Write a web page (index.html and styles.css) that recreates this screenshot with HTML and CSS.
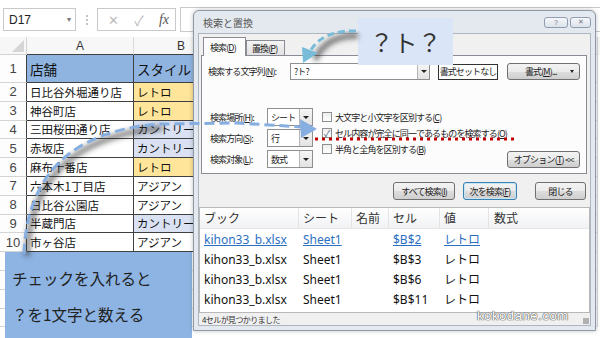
FILE: index.html
```html
<!DOCTYPE html>
<html lang="ja">
<head>
<meta charset="utf-8">
<title>検索と置換</title>
<link rel="stylesheet" href="styles.css">
</head>
<body>
<div class="fbar">
  <div class="namebox"><span>D17</span><span class="nb-arrow">▾</span></div>
  <div class="fsep"><span></span></div>
  <div class="fbtns"><span class="fx-x">✕</span><span class="fx-ok">✓</span><span class="fx-fx">fx</span></div>
  <div class="finput"></div>
</div>
<div class="sheet">
  <div class="row hdr">
    <div class="rh corner"><span class="tri"></span></div>
    <div class="c ca ch">A</div><div class="c cb ch">B</div><div class="c cc ch"></div><div class="c cd ch"></div><div class="c ce ch"></div><div class="c cf ch"></div><div class="c cg ch"></div>
  </div>
  <div class="row r1">
    <div class="rh tl">1</div>
    <div class="c ca t head big">店舗</div><div class="c cb t head big">スタイル</div><div class="c cc"></div><div class="c cd"></div><div class="c ce"></div><div class="c cf"></div><div class="c cg"></div>
  </div>
  <div class="row">
    <div class="rh tl">2</div>
    <div class="c ca t">日比谷外堀通り店</div><div class="c cb t retro">レトロ</div><div class="c cc"></div><div class="c cd"></div><div class="c ce"></div><div class="c cf"></div><div class="c cg"></div>
  </div>
  <div class="row">
    <div class="rh tl">3</div>
    <div class="c ca t">神谷町店</div><div class="c cb t retro">レトロ</div><div class="c cc"></div><div class="c cd"></div><div class="c ce"></div><div class="c cf"></div><div class="c cg"></div>
  </div>
  <div class="row">
    <div class="rh tl">4</div>
    <div class="c ca t">三田桜田通り店</div><div class="c cb t country">カントリー</div><div class="c cc"></div><div class="c cd"></div><div class="c ce"></div><div class="c cf"></div><div class="c cg"></div>
  </div>
  <div class="row">
    <div class="rh tl">5</div>
    <div class="c ca t">赤坂店</div><div class="c cb t country">カントリー</div><div class="c cc"></div><div class="c cd"></div><div class="c ce"></div><div class="c cf"></div><div class="c cg"></div>
  </div>
  <div class="row">
    <div class="rh tl">6</div>
    <div class="c ca t">麻布十番店</div><div class="c cb t retro">レトロ</div><div class="c cc"></div><div class="c cd"></div><div class="c ce"></div><div class="c cf"></div><div class="c cg"></div>
  </div>
  <div class="row">
    <div class="rh tl">7</div>
    <div class="c ca t">六本木1丁目店</div><div class="c cb t">アジアン</div><div class="c cc"></div><div class="c cd"></div><div class="c ce"></div><div class="c cf"></div><div class="c cg"></div>
  </div>
  <div class="row">
    <div class="rh tl">8</div>
    <div class="c ca t">日比谷公園店</div><div class="c cb t">アジアン</div><div class="c cc"></div><div class="c cd"></div><div class="c ce"></div><div class="c cf"></div><div class="c cg"></div>
  </div>
  <div class="row">
    <div class="rh tl">9</div>
    <div class="c ca t">半蔵門店</div><div class="c cb t country">カントリー</div><div class="c cc"></div><div class="c cd"></div><div class="c ce"></div><div class="c cf"></div><div class="c cg"></div>
  </div>
  <div class="row">
    <div class="rh tl">10</div>
    <div class="c ca t">市ヶ谷店</div><div class="c cb t">アジアン</div><div class="c cc"></div><div class="c cd"></div><div class="c ce"></div><div class="c cf"></div><div class="c cg"></div>
  </div>
  <div class="row">
    <div class="rh"></div>
    <div class="c ca"></div><div class="c cb"></div><div class="c cc"></div><div class="c cd"></div><div class="c ce"></div><div class="c cf"></div><div class="c cg"></div>
  </div>
  <div class="row">
    <div class="rh"></div>
    <div class="c ca"></div><div class="c cb"></div><div class="c cc"></div><div class="c cd"></div><div class="c ce"></div><div class="c cf"></div><div class="c cg"></div>
  </div>
  <div class="row">
    <div class="rh"></div>
    <div class="c ca"></div><div class="c cb"></div><div class="c cc"></div><div class="c cd"></div><div class="c ce"></div><div class="c cf"></div><div class="c cg"></div>
  </div>
  <div class="row">
    <div class="rh"></div>
    <div class="c ca"></div><div class="c cb"></div><div class="c cc"></div><div class="c cd"></div><div class="c ce"></div><div class="c cf"></div><div class="c cg"></div>
  </div>
</div>

<div class="callout-left">
  <p>チェックを入れると</p>
  <p>？を1文字と数える</p>
</div>

<div class="dlg">
  <div class="titlebar">
    <span class="title">検索と置換</span>
    <div class="tbtns"><span class="tbtn help">?</span><span class="tbtn close">✕</span></div>
  </div>
  <div class="client">
    <div class="tabs">
      <div class="tab active">検索(<u>D</u>)</div>
      <div class="tab">置換(<u>P</u>)</div>
    </div>
    <div class="panel">
      <div class="findrow">
        <span class="lbl lbl-find">検索する文字列(<u>N</u>):</span>
        <div class="combo find"><span class="val">?ト?</span><span class="dd"><i></i></span></div>
        <div class="fmtbox">書式セットなし</div>
        <div class="btn fmtbtn"><span>書式(<u>M</u>)...</span><i class="caret"></i></div>
      </div>
      <div class="opts">
        <div class="selects">
          <div class="selrow"><span class="lbl lbl-sel">検索場所(<u>H</u>):</span><div class="combo sel"><span class="val">シート</span><span class="dd"><i></i></span></div></div>
          <div class="selrow"><span class="lbl lbl-sel">検索方向(<u>S</u>):</span><div class="combo sel"><span class="val">行</span><span class="dd"><i></i></span></div></div>
          <div class="selrow"><span class="lbl lbl-sel">検索対象(<u>L</u>):</span><div class="combo sel"><span class="val">数式</span><span class="dd"><i></i></span></div></div>
        </div>
        <div class="checks">
          <div class="chkrow"><span class="box"></span>大文字と小文字を区別する(<u>C</u>)</div>
          <div class="chkrow"><span class="box on">✓</span>セル内容が完全に同一であるものを検索する(<u>O</u>)</div>
          <div class="chkrow"><span class="box"></span>半角と全角を区別する(<u>B</u>)</div>
        </div>
        <div class="btn optbtn">オプション(<u>T</u>) &lt;&lt;</div>
      </div>
    </div>
    <div class="actions">
      <div class="btn b-all">すべて検索(<u>I</u>)</div>
      <div class="btn b-next">次を検索(<u>F</u>)</div>
      <div class="btn b-close">閉じる</div>
    </div>
    <div class="results">
      <div class="lrow lhead">
        <span class="k1">ブック</span><span class="k2">シート</span><span class="k3">名前</span><span class="k4">セル</span><span class="k5">値</span><span class="k6">数式</span>
      </div>
      <div class="lrow link">
        <span class="k1"><u>kihon33_b.xlsx</u></span><span class="k2"><u>Sheet1</u></span><span class="k3"></span><span class="k4"><u>$B$2</u></span><span class="k5"><u>レトロ</u></span><span class="k6"></span>
      </div>
      <div class="lrow">
        <span class="k1">kihon33_b.xlsx</span><span class="k2">Sheet1</span><span class="k3"></span><span class="k4">$B$3</span><span class="k5">レトロ</span><span class="k6"></span>
      </div>
      <div class="lrow">
        <span class="k1">kihon33_b.xlsx</span><span class="k2">Sheet1</span><span class="k3"></span><span class="k4">$B$6</span><span class="k5">レトロ</span><span class="k6"></span>
      </div>
      <div class="lrow">
        <span class="k1">kihon33_b.xlsx</span><span class="k2">Sheet1</span><span class="k3"></span><span class="k4">$B$11</span><span class="k5">レトロ</span><span class="k6"></span>
      </div>
    </div>
    <div class="status"><span>4セルが見つかりました</span><span class="grip"></span></div>
  </div>
</div>

<div class="callout-top">？ト？</div>

<div class="watermark">kokodane.com</div>

<svg class="overlay" width="600" height="338" viewBox="0 0 600 338">
  <defs>
    <filter id="blur" x="-20%" y="-20%" width="140%" height="140%"><feGaussianBlur stdDeviation="2.5"/></filter>
  </defs>
  <path d="M27 256 C 30 182, 70 136, 162 128" fill="none" stroke="#333" stroke-opacity="0.55" stroke-width="6" filter="url(#blur)"/>
  <path d="M358 36 C 338 35, 322 43, 315 60" fill="none" stroke="#333" stroke-opacity="0.6" stroke-width="6" filter="url(#blur)"/>
  <path d="M24 254 C 27 178, 68 131, 160 124 L 238 123 L 302 127" fill="none" stroke="#86aee0" stroke-width="3" stroke-dasharray="10 5"/>
  <polygon points="300,119 317,129 301,138" fill="#86aee0"/>
  <path d="M356 31 C 336 30, 318 37, 311 50" fill="none" stroke="#78bcd9" stroke-width="3" stroke-dasharray="7 4"/>
  <polygon points="303,63 302,47 318,53" fill="#78bcd9"/>
  <line x1="315" y1="139" x2="514" y2="139" stroke="#c00000" stroke-width="3" stroke-dasharray="3 4"/>
</svg>
</body>
</html>
```

FILE: styles.css
```css
html, body {
  margin: 0;
  padding: 0;
}
body {
  width: 600px;
  height: 338px;
  overflow: hidden;
  position: relative;
  background: #ffffff;
  font-family: "Noto Sans CJK JP", sans-serif;
  color: #222;
}

/* ---------- formula bar ---------- */
.fbar {
  height: 37px;
  box-sizing: border-box;
  display: flex;
  align-items: flex-start;
  padding: 8px 0 0 3px;
}
.namebox {
  width: 73px;
  height: 23px;
  box-sizing: border-box;
  border: 1px solid #c9c9c9;
  display: flex;
  align-items: center;
  justify-content: space-between;
  padding: 0 4px 0 5px;
  font: 12px "Liberation Sans", sans-serif;
  color: #222;
}
.nb-arrow { font-size: 8px; color: #777; }
.fsep {
  width: 21px;
  height: 23px;
  display: flex;
  justify-content: center;
  align-items: center;
}
.fsep span {
  width: 0;
  height: 10px;
  border-left: 2px dotted #c4c4c4;
}
.fbtns {
  width: 79px;
  height: 23px;
  box-sizing: border-box;
  border: 1px solid #c9c9c9;
  display: flex;
  align-items: center;
  justify-content: space-between;
  padding: 0 6px 0 10px;
}
.fx-x { color: #bcbcbc; font-size: 13px; }
.fx-ok { color: #bcbcbc; font-size: 14px; }
.fx-fx { font: italic 14px "Liberation Serif", serif; color: #555; }
.finput {
  flex: 1;
  height: 25px;
  margin: -1px 0 0 4px;
  box-sizing: border-box;
  border: 1px solid #c9c9c9;
  border-right: none;
}

/* ---------- sheet ---------- */
.row {
  display: flex;
  height: 18.8px;
}
.row.hdr { height: 18px; background: #f7f7f7; }
.row.r1 { height: 28px; }
.rh {
  width: 27px;
  flex: none;
  box-sizing: border-box;
  border-right: 1px solid #d4d4d4;
  border-bottom: 1px solid #d4d4d4;
  display: flex;
  align-items: center;
  justify-content: center;
  font: 13px "Liberation Sans", sans-serif;
  color: #444;
  background: #fdfdfd;
}
.rh.tl { border-right-color: #404040; }
.corner {
  justify-content: flex-end;
  align-items: flex-end;
  padding: 0 2px 2px 0;
  background: #f7f7f7;
}
.tri {
  width: 0;
  height: 0;
  border-left: 12px solid transparent;
  border-bottom: 12px solid #d6d6d6;
}
.c {
  flex: none;
  box-sizing: border-box;
  border-right: 1px solid #dadada;
  border-bottom: 1px solid #dadada;
  overflow: hidden;
  white-space: nowrap;
}
.ca { width: 107px; }
.cb { width: 95px; }
.cc { width: 89px; }
.cd { width: 74px; }
.ce { width: 73px; }
.cf { width: 63px; }
.cg { width: 70px; }
.ch {
  display: flex;
  align-items: center;
  justify-content: center;
  font: 12px "Liberation Sans", sans-serif;
  color: #333;
}
.hdr .ca, .hdr .cb { border-bottom-color: #404040; }
.t {
  border-color: #404040;
  display: flex;
  align-items: center;
  padding-left: 3px;
  font-size: 11.5px;
  color: #111;
}
.t.big { font-size: 13.5px; }
.head { background: #8fb4e0; }
.retro { background: #ffe599; }
.country { background: #d9e1f2; }

/* ---------- left callout ---------- */
.callout-left {
  position: absolute;
  left: 5px;
  top: 252px;
  width: 187px;
  height: 90px;
  background: #8db4e2;
  box-sizing: border-box;
  padding: 8px 0 0 7px;
  z-index: 3;
}
.callout-left p {
  margin: 0;
  font-size: 15.5px;
  line-height: 36px;
  color: #222;
}

/* ---------- dialog ---------- */
.dlg {
  position: absolute;
  left: 193px;
  top: 10px;
  width: 403px;
  height: 321px;
  box-sizing: border-box;
  border: 1px solid #8d99a6;
  border-radius: 6px 6px 0 0;
  background: #e4e9ef;
  padding: 0 4px 4px;
  display: flex;
  flex-direction: column;
  box-shadow: 0 0 4px rgba(0,0,0,0.25);
  z-index: 4;
  font-size: 9px;
  letter-spacing: -0.9px;
}
.titlebar {
  height: 22px;
  flex: none;
  display: flex;
  align-items: center;
  justify-content: space-between;
  padding-left: 5px;
}
.title { font-size: 10px; color: #555; letter-spacing: 0; }
.tbtns { display: flex; gap: 2px; margin-right: 0; }
.tbtn {
  height: 11px;
  box-sizing: border-box;
  border: 1px solid #8f9db0;
  border-radius: 3px;
  background: linear-gradient(#f6f8fb, #dce2ea);
  display: flex;
  align-items: center;
  justify-content: center;
  font: 7px "Liberation Sans", sans-serif;
  color: #6c7785;
  letter-spacing: 0;
}
.tbtn.help { width: 24px; }
.tbtn.close { width: 21px; }

.client {
  flex: 1;
  background: #f0f0f0;
  border: 1px solid #adb6c0;
  display: flex;
  flex-direction: column;
  min-height: 0;
}
.tabs {
  display: flex;
  align-items: flex-end;
  height: 18px;
  margin: 3px 0 0 4px;
  flex: none;
}
.tab {
  height: 15px;
  box-sizing: border-box;
  border: 1px solid #898c95;
  border-bottom: none;
  background: linear-gradient(#f4f4f4, #e1e1e1);
  padding: 0 5px;
  display: flex;
  align-items: center;
  width: 39px;
}
.tab.active {
  height: 19px;
  width: 43px;
  margin-bottom: -1px;
  background: #fcfcfc;
  position: relative;
  z-index: 1;
  padding-left: 6px;
}
.panel {
  flex: none;
  height: 119px;
  margin: 0 3px 0 2px;
  box-sizing: border-box;
  border: 1px solid #898c95;
  background: #fcfcfc;
  padding: 7px 6px 8px 6px;
  display: flex;
  flex-direction: column;
}
.findrow {
  display: flex;
  align-items: center;
  height: 17px;
}
.lbl-find { width: 82px; flex: none; }
.combo {
  box-sizing: border-box;
  border: 1px solid #8e8f8f;
  background: #fff;
  display: flex;
  align-items: stretch;
  justify-content: space-between;
  flex: none;
}
.combo .val { padding-left: 3px; display: flex; align-items: center; }
.combo .dd {
  width: 11px;
  border-left: 1px solid #b5b5b5;
  background: linear-gradient(#f6f6f6, #e2e2e2);
  display: flex;
  align-items: center;
  justify-content: center;
}
.combo .dd i {
  width: 0;
  height: 0;
  border-left: 3px solid transparent;
  border-right: 3px solid transparent;
  border-top: 3px solid #222;
}
.combo.find { width: 140px; height: 17px; }
.fmtbox {
  width: 60px;
  height: 16px;
  margin-left: 8px;
  box-sizing: border-box;
  border: 1px solid #333;
  background: #fff;
  display: flex;
  align-items: center;
  justify-content: center;
  flex: none;
}
.btn {
  box-sizing: border-box;
  border: 1px solid #707070;
  border-radius: 3px;
  background: linear-gradient(#f3f3f3 0%, #ebebeb 50%, #dddddd 51%, #cfcfcf 100%);
  display: flex;
  align-items: center;
  justify-content: center;
  flex: none;
}
.fmtbtn {
  width: 73px;
  height: 17px;
  margin-left: 9px;
  justify-content: flex-start;
  padding-left: 17px;
}
.caret {
  margin-left: auto;
  margin-right: 5px;
  width: 0;
  height: 0;
  border-left: 2.5px solid transparent;
  border-right: 2.5px solid transparent;
  border-top: 3px solid #222;
}
.opts {
  display: flex;
  margin-top: 28px;
  flex: 1;
}
.selects {
  display: flex;
  flex-direction: column;
  gap: 3px;
  margin-left: 2px;
}
.selrow { display: flex; align-items: center; height: 18px; }
.lbl-sel { width: 57px; flex: none; }
.combo.sel { width: 46px; height: 18px; }
.combo.sel .dd { width: 12px; }
.checks {
  margin: 1px 0 0 9px;
  display: flex;
  flex-direction: column;
}
.chkrow {
  height: 16px;
  display: flex;
  align-items: center;
  white-space: nowrap;
}
.box {
  width: 10px;
  height: 10px;
  box-sizing: border-box;
  border: 1px solid #8e8f8f;
  background: linear-gradient(#eeeeee, #ffffff);
  margin-right: 3px;
  flex: none;
  display: flex;
  align-items: center;
  justify-content: center;
  font-size: 9px;
  color: #4a5f7e;
  letter-spacing: 0;
}
.optbtn {
  width: 73px;
  height: 17px;
  margin-left: auto;
  align-self: flex-end;
  letter-spacing: -0.8px;
}
.actions {
  flex: none;
  display: flex;
  justify-content: flex-end;
  margin-top: 8px;
  padding-right: 4px;
  height: 18px;
}
.actions .btn { height: 18px; }
.b-all { width: 62px; }
.b-next {
  width: 54px;
  margin-left: 8px;
  border-color: #3c7fb1;
  box-shadow: inset 0 0 0 1px #c5e5f7;
}
.b-close { width: 51px; margin-left: 18px; }
.results {
  flex: none;
  height: 106px;
  margin-top: 7px;
  box-sizing: border-box;
  border: 1px solid #b8b8b8;
  background: #fff;
  font-family: "Noto Sans", "Noto Sans CJK JP", sans-serif;
  font-size: 12px;
  letter-spacing: 0;
  color: #111;
}
.lrow {
  display: flex;
  height: 20px;
  align-items: center;
}
.lrow span {
  box-sizing: border-box;
  padding-left: 4px;
  white-space: nowrap;
  overflow: hidden;
  flex: none;
}
.lhead {
  background: linear-gradient(#ffffff, #f1f2f4);
  border-bottom: 1px solid #e6e6e6;
  color: #333;
}
.lhead span {
  height: 20px;
  display: flex;
  align-items: center;
  border-right: 1px solid #e4e4e4;
}
.k1 { width: 99px; }
.k2 { width: 53px; }
.k3 { width: 37px; }
.k4 { width: 51px; }
.k5 { width: 49px; }
.k6 { flex: 1 !important; border-right: none !important; padding-left: 5px !important; }
.link { color: #2b6fc2; }
.status {
  flex: 1;
  display: flex;
  align-items: center;
  justify-content: space-between;
  padding-left: 3px;
  font-size: 8px;
  letter-spacing: -0.6px;
  color: #333;
}
.grip {
  width: 6px;
  height: 6px;
  align-self: flex-end;
  margin: 0 1px 1px 0;
  background: radial-gradient(circle, #b0b0b0 0.8px, transparent 1px) 0 0 / 2px 2px;
}

/* ---------- top callout ---------- */
.callout-top {
  position: absolute;
  left: 358px;
  top: 18px;
  width: 95px;
  height: 47px;
  background: #dbe5f8;
  display: flex;
  align-items: center;
  justify-content: center;
  font-size: 24px;
  color: #333;
  z-index: 5;
}

/* ---------- watermark ---------- */
.watermark {
  position: absolute;
  left: 477px;
  top: 308px;
  font: 13px "Liberation Sans", sans-serif;
  letter-spacing: 0.6px;
  color: #ffffff;
  text-shadow: 0 0 1px #555, 0 0 1px #555, 0 0 1px #555;
  z-index: 6;
}

/* ---------- overlay arrows ---------- */
.overlay {
  position: absolute;
  left: 0;
  top: 0;
  z-index: 7;
  pointer-events: none;
}
```
